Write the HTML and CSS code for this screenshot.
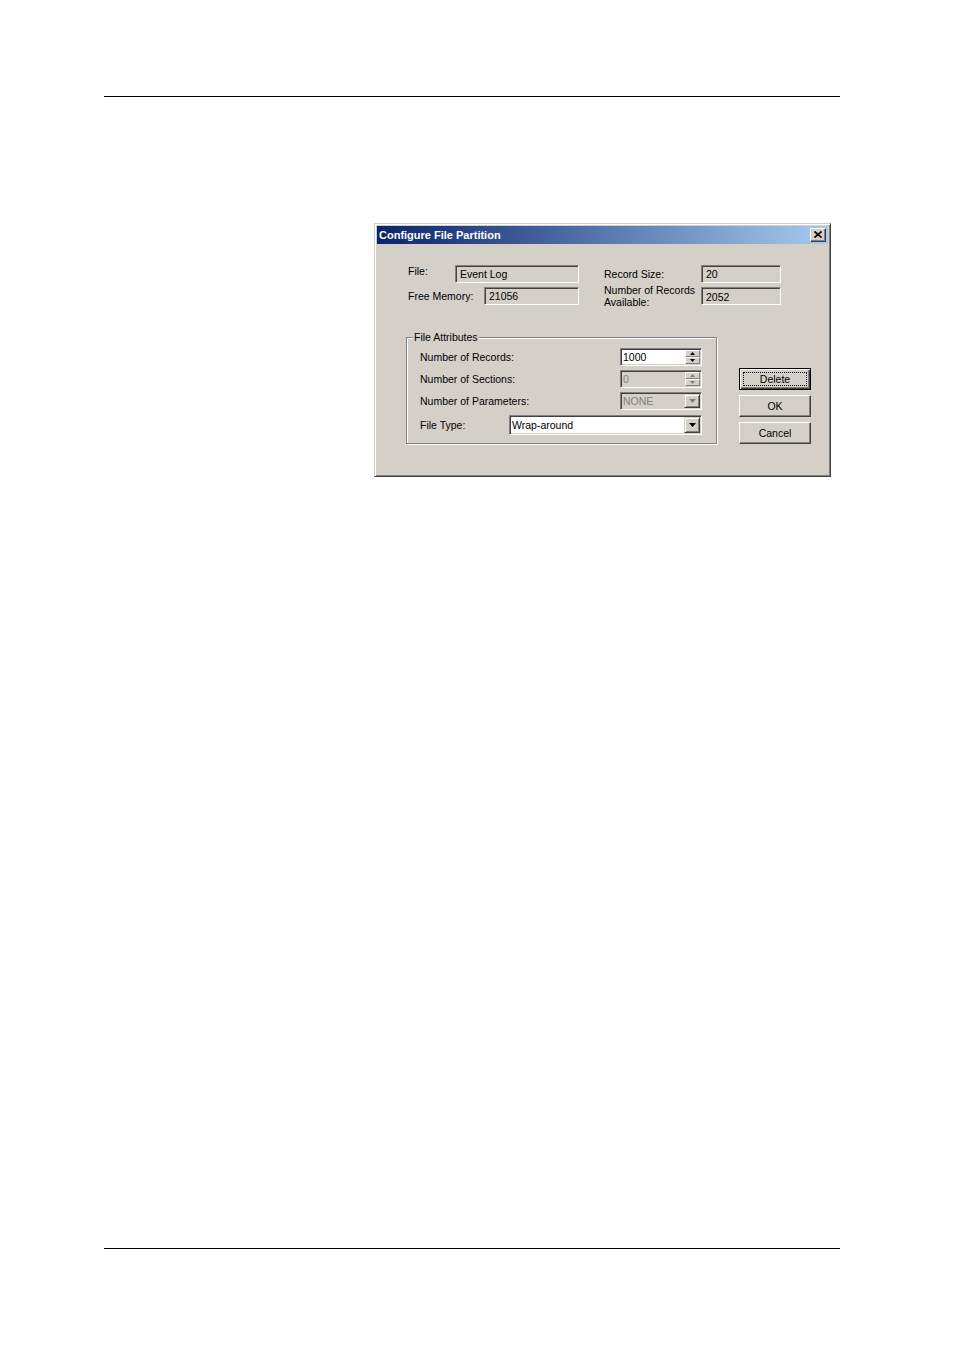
FILE: index.html
```html
<!DOCTYPE html>
<html>
<head>
<meta charset="utf-8">
<link rel="stylesheet" href="styles.css">
</head>
<body>
<div class="page">
  <div class="rule rule-top"></div>

  <div class="dialog">
    <div class="titlebar">
      <span class="title">Configure File Partition</span>
      <span class="closebtn">
        <svg width="8" height="7" viewBox="0 0 8 7"><path d="M0.5 0.5 L7.5 6.5 M7.5 0.5 L0.5 6.5" stroke="#000" stroke-width="1.7" fill="none"/></svg>
      </span>
    </div>

    <div class="body">
      <div class="top">
        <div class="col col-left">
          <div class="frow"><span class="lbl lbl-file">File:</span><span class="field f-file">Event Log</span></div>
          <div class="frow"><span class="lbl">Free Memory:</span><span class="field f-mem">21056</span></div>
        </div>
        <div class="col col-right">
          <div class="frow"><span class="lbl">Record Size:</span><span class="field f-small">20</span></div>
          <div class="frow"><span class="lbl lbl-two">Number of Records<br>Available:</span><span class="field f-small f-avail">2052</span></div>
        </div>
      </div>

      <div class="bottom">
        <div class="group">
          <div class="legend">File Attributes</div>
          <div class="rows">
            <div class="grow">
              <span class="lbl">Number of Records:</span>
              <span class="spin">
                <span class="spin-text">1000</span>
                <span class="spin-btns">
                  <span class="sbtn"><svg width="5" height="3" viewBox="0 0 5 3"><polygon points="2.5,0 5,3 0,3" fill="#000"/></svg></span>
                  <span class="sbtn"><svg width="5" height="3" viewBox="0 0 5 3"><polygon points="0,0 5,0 2.5,3" fill="#000"/></svg></span>
                </span>
              </span>
            </div>
            <div class="grow">
              <span class="lbl">Number of Sections:</span>
              <span class="spin disabled">
                <span class="spin-text">0</span>
                <span class="spin-btns">
                  <span class="sbtn"><svg width="5" height="3" viewBox="0 0 5 3"><polygon points="2.5,0 5,3 0,3" fill="#808080"/></svg></span>
                  <span class="sbtn"><svg width="5" height="3" viewBox="0 0 5 3"><polygon points="0,0 5,0 2.5,3" fill="#808080"/></svg></span>
                </span>
              </span>
            </div>
            <div class="grow">
              <span class="lbl">Number of Parameters:</span>
              <span class="combo combo-small disabled">
                <span class="combo-text">NONE</span>
                <span class="cbtn"><svg width="7" height="4" viewBox="0 0 7 4"><polygon points="0,0 7,0 3.5,4" fill="#808080"/></svg></span>
              </span>
            </div>
            <div class="grow grow-tall">
              <span class="lbl">File Type:</span>
              <span class="combo combo-wide">
                <span class="combo-text">Wrap-around</span>
                <span class="cbtn"><svg width="7" height="4" viewBox="0 0 7 4"><polygon points="0,0 7,0 3.5,4" fill="#000"/></svg></span>
              </span>
            </div>
          </div>
        </div>

        <div class="buttons">
          <div class="btn btn-default"><span class="focus">Delete</span></div>
          <div class="btn"><span class="btn-label">OK</span></div>
          <div class="btn"><span class="btn-label">Cancel</span></div>
        </div>
      </div>
    </div>
  </div>

  <div class="rule rule-bottom"></div>
</div>
</body>
</html>
```

FILE: styles.css
```css
html, body {
  margin: 0;
  padding: 0;
  background: #fff;
}

.page {
  width: 954px;
  height: 1351px;
  overflow: hidden;
  font-family: "Liberation Sans", Arial, sans-serif;
  font-size: 10.5px;
  color: #000;
}

.rule {
  height: 1px;
  background: #000;
  width: 736px;
  margin-left: 104px;
}

.rule-top {
  margin-top: 96px;
}

.rule-bottom {
  margin-top: 771px;
}

/* ---------- dialog window ---------- */
.dialog {
  box-sizing: border-box;
  width: 457px;
  height: 254px;
  margin: 126px 0 0 374px;
  background: #d4d0c8;
  border: 1px solid;
  border-color: #d4d0c8 #404040 #404040 #d4d0c8;
  box-shadow: inset 1px 1px #fff, inset -1px -1px #808080;
  padding: 2px;
}

.titlebar {
  height: 18px;
  display: flex;
  align-items: center;
  justify-content: space-between;
  background: linear-gradient(to right, #0a246a, #a6caf0);
  padding-left: 2px;
}

.title {
  color: #fff;
  font-weight: bold;
  font-size: 11px;
  line-height: 18px;
}

.closebtn {
  box-sizing: border-box;
  width: 16px;
  height: 14px;
  margin-right: 2px;
  background: #d4d0c8;
  border: 1px solid;
  border-color: #fff #404040 #404040 #fff;
  box-shadow: inset -1px -1px #808080;
  display: flex;
  align-items: center;
  justify-content: center;
}

.closebtn svg {
  display: block;
  margin-left: -1px;
  margin-top: -1px;
}

/* ---------- body ---------- */
.body {
  padding: 21px 0 0 31px;
}

.top {
  display: flex;
}

.col {
  display: flex;
  flex-direction: column;
  gap: 4px;
}

.col-left {
  width: 171px;
  margin-right: 25px;
}

.col-right {
  width: 177px;
}

.frow {
  height: 18px;
  display: flex;
  align-items: center;
}

.lbl {
  white-space: nowrap;
  line-height: 12px;
}

.lbl-file {
  margin-top: -6px;
}

.lbl-two {
  line-height: 12px;
}

.field {
  box-sizing: border-box;
  height: 18px;
  margin-left: auto;
  border: 1px solid;
  border-color: #808080 #fff #fff #808080;
  box-shadow: inset 1px 1px #404040, inset -1px -1px #d4d0c8;
  padding: 0 0 0 4px;
  line-height: 16px;
  background: #d4d0c8;
}

.f-file {
  width: 124px;
}

.f-mem {
  width: 95px;
}

.f-small {
  width: 80px;
}

.f-avail {
  line-height: 18px;
}

/* ---------- bottom ---------- */
.bottom {
  display: flex;
  align-items: flex-start;
  margin-top: 32px;
  margin-left: -2px;
}

.group {
  box-sizing: border-box;
  width: 311px;
  height: 107px;
  border: 1px solid #808080;
  box-shadow: inset 1px 1px #fff, 1px 1px #fff;
}

.legend {
  display: block;
  width: max-content;
  height: 13px;
  line-height: 13px;
  margin: -7px 0 0 6px;
  padding: 0 1px;
  background: #d4d0c8;
}

.rows {
  margin-top: 4px;
  display: flex;
  flex-direction: column;
  gap: 4px;
  padding: 0 14px 0 13px;
}

.grow {
  height: 18px;
  display: flex;
  align-items: center;
}

.grow-tall {
  height: 20px;
  margin-top: 1px;
}

/* sunken control base */
.spin,
.combo {
  box-sizing: border-box;
  margin-left: auto;
  display: flex;
  align-items: stretch;
  border: 1px solid;
  border-color: #808080 #fff #fff #808080;
  box-shadow: inset 1px 1px #404040, inset -1px -1px #d4d0c8;
  padding: 1px;
  background: #fff;
}

.spin {
  width: 82px;
  height: 18px;
}

.spin.disabled,
.combo.disabled {
  background: #d4d0c8;
  color: #808080;
}

.spin-text,
.combo-text {
  flex: 1;
  line-height: 14px;
  padding-left: 1px;
  white-space: nowrap;
}

.spin-btns {
  display: flex;
  flex-direction: column;
  width: 15px;
}

.sbtn {
  box-sizing: border-box;
  flex: 1;
  background: #d4d0c8;
  border: 1px solid;
  border-color: #fff #808080 #808080 #fff;
  display: flex;
  align-items: center;
  justify-content: center;
}

.sbtn svg {
  display: block;
}

.combo-small {
  width: 82px;
  height: 18px;
}

.combo-wide {
  width: 193px;
  height: 20px;
}

.combo-wide .combo-text {
  line-height: 16px;
}

.cbtn {
  box-sizing: border-box;
  width: 16px;
  background: #d4d0c8;
  border: 1px solid;
  border-color: #d4d0c8 #404040 #404040 #d4d0c8;
  box-shadow: inset 1px 1px #fff, inset -1px -1px #808080;
  display: flex;
  align-items: center;
  justify-content: center;
}

.cbtn svg {
  display: block;
}

/* ---------- push buttons ---------- */
.buttons {
  display: flex;
  flex-direction: column;
  gap: 5px;
  margin-left: 22px;
  margin-top: 31px;
}

.btn {
  box-sizing: border-box;
  width: 72px;
  height: 22px;
  background: #d4d0c8;
  border: 1px solid;
  border-color: #fff #404040 #404040 #fff;
  box-shadow: inset -1px -1px #808080;
  display: flex;
  align-items: center;
  justify-content: center;
}

.btn-label {
  line-height: 14px;
}

.btn-default {
  border: 1px solid #000;
  box-shadow: inset 1px 1px #fff, inset -1px -1px #404040, inset -2px -2px #808080;
  padding: 3px;
  align-items: stretch;
}

.focus {
  flex: 1;
  border: 1px dotted #000;
  display: flex;
  align-items: center;
  justify-content: center;
  line-height: 12px;
}
```
